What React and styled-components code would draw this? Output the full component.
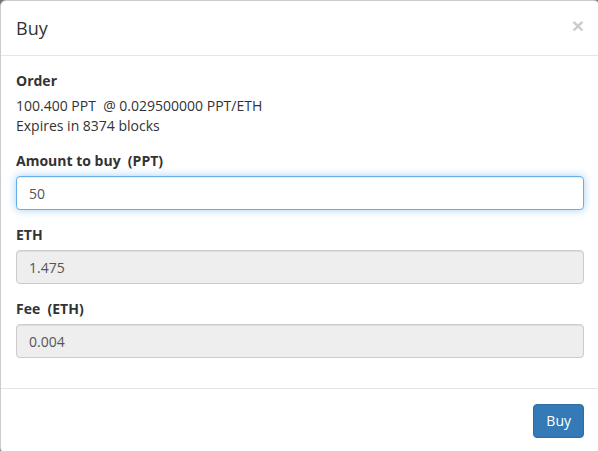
import React from 'react';
import styled, { createGlobalStyle } from 'styled-components';

const GlobalStyle = createGlobalStyle`
  html, body {
    margin: 0;
    padding: 0;
    overflow: hidden;
    background: #7b7b7b;
  }
  * { box-sizing: border-box; }
`;

const Dialog = styled.div`
  width: 600px;
  background: #fff;
  border: 1px solid rgba(0, 0, 0, 0.2);
  border-radius: 6px;
  box-shadow: 0 5px 15px rgba(0, 0, 0, 0.5);
  font-family: 'Open Sans', 'Liberation Sans', sans-serif;
  font-size: 14px;
  line-height: 20px;
  color: #333;
`;

const Header = styled.div`
  display: flex;
  align-items: flex-start;
  justify-content: space-between;
  padding: 15px;
  border-bottom: 1px solid #e5e5e5;
`;

const Title = styled.h4`
  margin: 0;
  font-size: 18px;
  font-weight: 400;
  line-height: 24px;
`;

const Close = styled.button`
  margin-top: -1px;
  padding: 0;
  border: 0;
  background: transparent;
  font-family: 'Liberation Sans', sans-serif;
  font-size: 21px;
  font-weight: 700;
  line-height: 1;
  color: #000;
  opacity: 0.2;
  cursor: pointer;
`;

const Body = styled.div`
  padding: 15px;
`;

const Group = styled.div`
  margin-bottom: 15px;
`;

const Label = styled.label`
  display: inline-block;
  margin-bottom: 5px;
  font-weight: 700;
  white-space: pre;
`;

const Line = styled.div`
  white-space: pre;
`;

const Input = styled.input`
  display: block;
  width: 100%;
  height: 34px;
  padding: 6px 12px;
  font-family: inherit;
  font-size: 14px;
  color: #555;
  background: ${p => (p.readOnly ? '#eee' : '#fff')};
  border: 1px solid ${p => (p.$focus ? '#66afe9' : '#ccc')};
  border-radius: 4px;
  outline: none;
  box-shadow: ${p =>
    p.$focus
      ? 'inset 0 1px 1px rgba(0,0,0,.075), 0 0 8px rgba(102,175,233,.6)'
      : 'inset 0 1px 1px rgba(0,0,0,.075)'};
`;

const Footer = styled.div`
  display: flex;
  justify-content: flex-end;
  padding: 15px;
  border-top: 1px solid #e5e5e5;
`;

const Button = styled.button`
  height: 34px;
  padding: 6px 12px;
  font-family: inherit;
  font-size: 14px;
  line-height: 20px;
  color: #fff;
  background: #337ab7;
  border: 1px solid #2e6da4;
  border-radius: 4px;
  cursor: pointer;
`;

function App() {
  return (
    <>
      <GlobalStyle />
      <Dialog>
        <Header>
          <Title>Buy</Title>
          <Close>×</Close>
        </Header>
        <Body>
          <Group>
            <Label>Order</Label>
            <Line>100.400 PPT  @ 0.029500000 PPT/ETH</Line>
            <Line>Expires in 8374 blocks</Line>
          </Group>
          <Group>
            <Label>Amount to buy  (PPT)</Label>
            <Input $focus defaultValue="50" />
          </Group>
          <Group>
            <Label>ETH</Label>
            <Input readOnly value="1.475" />
          </Group>
          <Group>
            <Label>Fee  (ETH)</Label>
            <Input readOnly value="0.004" />
          </Group>
        </Body>
        <Footer>
          <Button>Buy</Button>
        </Footer>
      </Dialog>
    </>
  );
}

export default App;
